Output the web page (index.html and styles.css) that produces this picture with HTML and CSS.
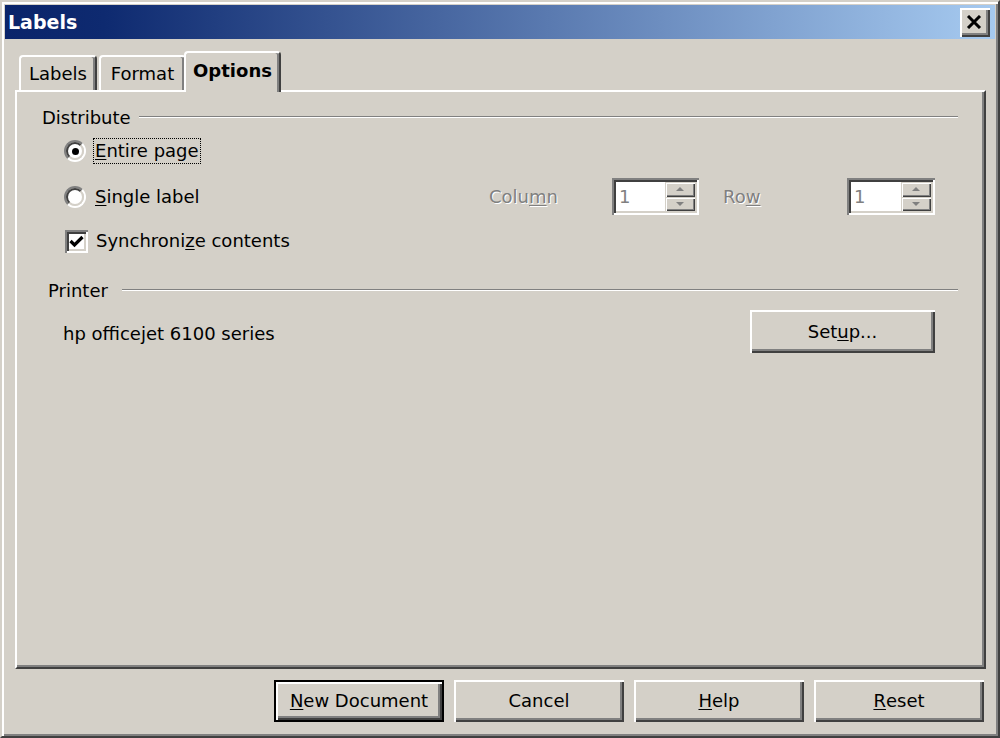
FILE: index.html
```html
<!DOCTYPE html>
<html>
<head>
<meta charset="utf-8">
<title>Labels</title>
<link rel="stylesheet" href="styles.css">
</head>
<body>
<div class="window">
  <div class="titlebar">
    <span class="title">Labels</span>
    <div class="close">
      <svg width="16" height="14" viewBox="0 0 16 14"><path d="M2 1 L14 13 M14 1 L2 13" stroke="#000" stroke-width="3" fill="none"/></svg>
    </div>
  </div>
  <div class="body">
    <div class="tabs">
      <div class="tab tab-labels">Labels</div>
      <div class="tab tab-format">Format</div>
      <div class="tab tab-active">Options</div>
    </div>
    <div class="panel">
      <div class="group-header gh-distribute"><span>Distribute</span><span class="rule"></span></div>
      <div class="opt-row row-1">
        <span class="radio checked"><span class="radio-inner"><span class="dot"></span></span></span>
        <span class="lbl focus"><u>E</u>ntire page</span>
      </div>
      <div class="opt-row row-2">
        <span class="radio"><span class="radio-inner"></span></span>
        <span class="lbl"><u>S</u>ingle label</span>
        <div class="pos-group">
          <span class="dis-label lbl-col">Colu<u>m</u>n</span>
          <div class="spin spin-col">
            <span class="spin-text">1</span>
            <div class="spin-btns">
              <div class="spin-btn"><svg width="8" height="4" viewBox="0 0 8 4"><path d="M0 4 L4 0 L8 4Z" fill="#808080"/></svg></div>
              <div class="spin-btn"><svg width="8" height="4" viewBox="0 0 8 4"><path d="M0 0 L4 4 L8 0Z" fill="#808080"/></svg></div>
            </div>
          </div>
          <span class="dis-label lbl-row">Ro<u>w</u></span>
          <div class="spin spin-row">
            <span class="spin-text">1</span>
            <div class="spin-btns">
              <div class="spin-btn"><svg width="8" height="4" viewBox="0 0 8 4"><path d="M0 4 L4 0 L8 4Z" fill="#808080"/></svg></div>
              <div class="spin-btn"><svg width="8" height="4" viewBox="0 0 8 4"><path d="M0 0 L4 4 L8 0Z" fill="#808080"/></svg></div>
            </div>
          </div>
        </div>
      </div>
      <div class="opt-row row-3">
        <span class="check"><svg width="15" height="13" viewBox="0 0 15 13"><path d="M1.5 6 L5.5 10 L13.5 2" stroke="#000" stroke-width="3.2" fill="none"/></svg></span>
        <span class="lbl">Synchroni<u>z</u>e contents</span>
      </div>
      <div class="group-header gh-printer"><span>Printer</span><span class="rule"></span></div>
      <div class="printer-row">
        <span class="printer-name">hp officejet 6100 series</span>
        <div class="btn btn-setup">Set<u>u</u>p...</div>
      </div>
    </div>
    <div class="buttons">
      <div class="btn btn-default"><u>N</u>ew Document</div>
      <div class="btn">Cancel</div>
      <div class="btn"><u>H</u>elp</div>
      <div class="btn"><u>R</u>eset</div>
    </div>
  </div>
</div>
</body>
</html>
```
FILE: styles.css
```css
* { box-sizing: border-box; }
html, body { margin: 0; padding: 0; }
body {
  background: #d4d0c8;
  font-family: "DejaVu Sans", "Liberation Sans", sans-serif;
  font-size: 18px;
  color: #000;
}
u { text-decoration: underline; text-underline-offset: 2px; }

.window {
  width: 1000px;
  height: 738px;
  background: #d4d0c8;
  border: 2px solid;
  border-color: #d4d0c8 #404040 #404040 #d4d0c8;
  box-shadow: inset 2px 2px #fff, inset -2px -2px #808080;
  padding: 3px;
  display: flex;
  flex-direction: column;
}

.titlebar {
  height: 34px;
  flex: none;
  display: flex;
  align-items: center;
  justify-content: space-between;
  padding: 0 5px 0 3px;
  background: linear-gradient(to right, #0a246a 0%, #0e2a70 10%, #a6caf0 100%);
}
.title {
  color: #fff;
  font-weight: bold;
  font-size: 19px;
}
.close {
  width: 30px;
  height: 29px;
  margin-top: 1px;
  background: #d4d0c8;
  box-shadow: inset 2px 2px #fff, inset -2px -2px #404040, inset -4px -4px #808080;
  display: flex;
  align-items: center;
  justify-content: center;
  padding: 0 2px 2px 0;
}

.body {
  flex: 1;
  display: flex;
  flex-direction: column;
  padding: 12px 9px 0 10px;
}

.tabs {
  height: 39px;
  display: flex;
  align-items: flex-end;
  padding-left: 4px;
  position: relative;
  z-index: 2;
}
.tab {
  height: 35px;
  background: #d4d0c8;
  border-top: 2px solid #fff;
  border-left: 2px solid #fff;
  border-right: 2px solid #404040;
  box-shadow: inset -2px 0 #808080;
  border-radius: 4px 4px 0 0;
  display: flex;
  align-items: center;
  justify-content: center;
  padding-bottom: 1px;
}
.tab-labels { width: 78px; margin-right: 2px; }
.tab-format { width: 87px; }
.tab-active {
  width: 97px;
  height: 41px;
  margin-left: -2px;
  margin-bottom: -2px;
  font-weight: bold;
  padding-bottom: 5px;
}

.panel {
  height: 579px;
  flex: none;
  border: 2px solid;
  border-color: #fff #404040 #404040 #fff;
  box-shadow: inset -2px -2px #808080;
  padding: 13px 26px 0 25px;
  display: flex;
  flex-direction: column;
}

.group-header {
  height: 24px;
  display: flex;
  align-items: center;
}
.rule {
  flex: 1;
  height: 2px;
  border-top: 1px solid #808080;
  border-bottom: 1px solid #fff;
}
.gh-distribute .rule { margin-left: 8px; }
.gh-printer { padding-left: 6px; margin-top: 25px; }
.gh-printer .rule { margin-left: 14px; }

.opt-row {
  display: flex;
  align-items: center;
  padding-left: 22px;
}
.row-1 { height: 24px; margin-top: 10px; }
.row-2 { height: 37px; margin-top: 15px; }
.row-3 { height: 24px; margin-top: 14px; }

.radio {
  width: 22px;
  height: 22px;
  border-radius: 50%;
  border: 2px solid;
  border-color: #808080 #fff #fff #808080;
  flex: none;
}
.radio-inner {
  display: flex;
  align-items: center;
  justify-content: center;
  width: 100%;
  height: 100%;
  border-radius: 50%;
  border: 2px solid;
  border-color: #404040 #d4d0c8 #d4d0c8 #404040;
  background: #fff;
}
.dot {
  width: 7px;
  height: 7px;
  border-radius: 50%;
  background: #000;
}
.lbl {
  margin-left: 7px;
  border: 1px dotted transparent;
  padding: 0 1px;
  line-height: 24px;
}
.lbl.focus { border-color: #000; }

.check {
  width: 23px;
  height: 23px;
  flex: none;
  margin-left: 1px;
  background: #fff;
  box-shadow: inset 2px 2px #808080, inset -2px -2px #fff, inset 4px 4px #404040, inset -4px -4px #d4d0c8;
  display: flex;
  align-items: center;
  justify-content: center;
  padding-top: 1px;
}
.row-3 .lbl { margin-left: 6px; }

.pos-group {
  margin-left: auto;
  margin-right: 23px;
  display: flex;
  align-items: center;
}
.dis-label {
  color: #808080;
  text-shadow: 1px 1px 0 #fff;
}
.lbl-col { width: 123px; }
.lbl-row { width: 124px; margin-left: 24px; }
.spin {
  height: 37px;
  background: #fff;
  box-shadow: inset 2px 2px #808080, inset -2px -2px #fff, inset 4px 4px #404040, inset -4px -4px #d4d0c8;
  padding: 4px;
  display: flex;
}
.spin-col { width: 87px; }
.spin-row { width: 88px; }
.spin-text {
  flex: 1;
  color: #808080;
  padding-left: 3px;
  display: flex;
  align-items: center;
}
.spin-btns {
  width: 30px;
  display: flex;
  flex-direction: column;
}
.spin-btn {
  flex: 1;
  background: #d4d0c8;
  box-shadow: inset 1px 1px #d4d0c8, inset 2px 2px #fff, inset -1px -1px #404040, inset -2px -2px #808080;
  display: flex;
  align-items: center;
  justify-content: center;
}

.printer-row {
  height: 43px;
  margin-top: 8px;
  display: flex;
  align-items: center;
}
.printer-name { padding-left: 21px; padding-top: 3px; }

.btn {
  height: 42px;
  width: 170px;
  background: #d4d0c8;
  box-shadow: inset 2px 2px #fff, inset -2px -2px #404040, inset -4px -4px #808080;
  display: flex;
  align-items: center;
  justify-content: center;
  padding-bottom: 1px;
}
.btn-setup {
  width: 185px;
  height: 43px;
  margin-left: auto;
  margin-right: 23px;
}
.btn-default {
  border: 2px solid #000;
  box-shadow: inset 2px 2px #fff, inset -2px -2px #404040, inset -4px -4px #808080;
}

.buttons {
  margin-top: 11px;
  display: flex;
  justify-content: flex-end;
  gap: 10px;
  padding-right: 2px;
}
```
